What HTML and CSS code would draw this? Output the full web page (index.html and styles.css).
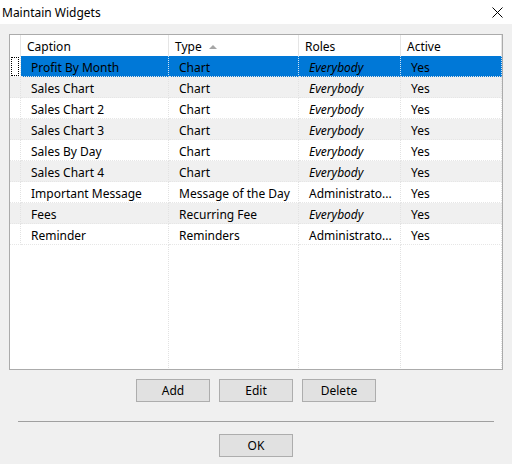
FILE: index.html
```html
<!doctype html>
<html>
	<head>
		<meta charset="UTF-8">
		<title>Maintain Widgets</title>
		<link rel="stylesheet" href="styles.css">
	</head>
	<body>
		<div class="titlebar">
			<span class="caption">Maintain Widgets</span>
			<svg class="close" width="11" height="11" viewBox="0 0 11 11">
				<path d="M0.5 0.5L10.5 10.5M10.5 0.5L0.5 10.5" stroke="#000" stroke-width="1" fill="none"/>
			</svg>
		</div>
		<div class="dialog">
			<div class="grid">
				<table class="list">
					<tr class="head">
						<th class="sel"></th>
						<th class="c1">Caption</th>
						<th class="c2">Type <span class="sort"></span></th>
						<th class="c3">Roles</th>
						<th class="c4">Active</th>
					</tr>
					<tr class="row current">
						<td class="sel"><div class="focus"></div></td>
						<td>Profit By Month</td><td>Chart</td><td class="any">Everybody</td><td>Yes</td>
					</tr>
					<tr class="row alt">
						<td class="sel"></td>
						<td>Sales Chart</td><td>Chart</td><td class="any">Everybody</td><td>Yes</td>
					</tr>
					<tr class="row">
						<td class="sel"></td>
						<td>Sales Chart 2</td><td>Chart</td><td class="any">Everybody</td><td>Yes</td>
					</tr>
					<tr class="row alt">
						<td class="sel"></td>
						<td>Sales Chart 3</td><td>Chart</td><td class="any">Everybody</td><td>Yes</td>
					</tr>
					<tr class="row">
						<td class="sel"></td>
						<td>Sales By Day</td><td>Chart</td><td class="any">Everybody</td><td>Yes</td>
					</tr>
					<tr class="row alt">
						<td class="sel"></td>
						<td>Sales Chart 4</td><td>Chart</td><td class="any">Everybody</td><td>Yes</td>
					</tr>
					<tr class="row">
						<td class="sel"></td>
						<td>Important Message</td><td>Message of the Day</td><td>Administrato...</td><td>Yes</td>
					</tr>
					<tr class="row alt">
						<td class="sel"></td>
						<td>Fees</td><td>Recurring Fee</td><td class="any">Everybody</td><td>Yes</td>
					</tr>
					<tr class="row">
						<td class="sel"></td>
						<td>Reminder</td><td>Reminders</td><td>Administrato...</td><td>Yes</td>
					</tr>
					<tr class="filler">
						<td class="sel"></td><td></td><td></td><td></td><td></td>
					</tr>
				</table>
			</div>
			<div class="actions">
				<button class="btn">Add</button>
				<button class="btn">Edit</button>
				<button class="btn">Delete</button>
			</div>
			<div class="rule"></div>
			<div class="actions ok">
				<button class="btn">OK</button>
			</div>
		</div>
	</body>
</html>
```

FILE: styles.css
```css
body{
	margin:0;
	background-color:#f0f0f0;
	font-family:"Noto Sans","Liberation Sans",sans-serif;
	font-size:12px;
	color:#000
}
.titlebar{
	height:24px;
	background-color:#fff;
	display:flex;
	align-items:center;
	justify-content:space-between;
	padding:0 9px 0 2px
}
.caption{font-size:12px;line-height:24px;padding-top:1px}
.close{display:block;margin-top:1px}

.dialog{padding:10px 9px 0 9px}
.grid{
	height:334px;
	border:1px solid #ababab;
	background-color:#fff;
	overflow:hidden
}
.list{
	border-collapse:separate;
	border-spacing:0;
	table-layout:fixed;
	width:492px
}
.list th,.list td{
	box-sizing:border-box;
	padding:1px 0 0 10px;
	height:21px;
	text-align:left;
	font-weight:normal;
	white-space:nowrap;
	overflow:hidden;
	border-right:1px dotted #e2e2e2
}
.list th{padding-left:6px;border-right:1px solid #e5e5e5}
.list .sel{width:11px;padding:0}
.list .c1{width:148px}
.list .c2{width:130px}
.list .c3{width:102px}
.list .c4{width:101px}
.row td{border-bottom:1px dotted #e6e6e6;padding-top:2px}
.row.alt td{background-color:#f0f0f0}
.row.current td{background-color:#0078d7;border-right-color:#cfe3f5}
.row.current td.sel{background-color:#fff;border-right-color:#e2e2e2}
.row .sel{background-color:#fff}
.row.alt td.sel{background-color:#f0f0f0}
.any{font-style:italic}
.focus{
	margin:0 1px 0 1px;
	height:19px;
	border:1px dotted #000;
	box-sizing:border-box
}
.sort{
	display:inline-block;
	margin-left:4px;
	width:0;
	height:0;
	border-left:4px solid transparent;
	border-right:4px solid transparent;
	border-bottom:4px solid #a6a6a6;
	vertical-align:2px
}
.filler td{height:123px}
.filler td.sel{border-right-color:transparent}

.actions{
	display:flex;
	justify-content:center;
	gap:9px;
	margin-top:9px
}
.btn{
	width:74px;
	height:23px;
	background-color:#e1e1e1;
	border:1px solid #adadad;
	font-family:inherit;
	font-size:12px;
	color:#000;
	padding:0
}
.rule{
	margin:19px 9px 0 9px;
	border-top:1px solid #a0a0a0
}
.actions.ok{margin-top:12px}
```
